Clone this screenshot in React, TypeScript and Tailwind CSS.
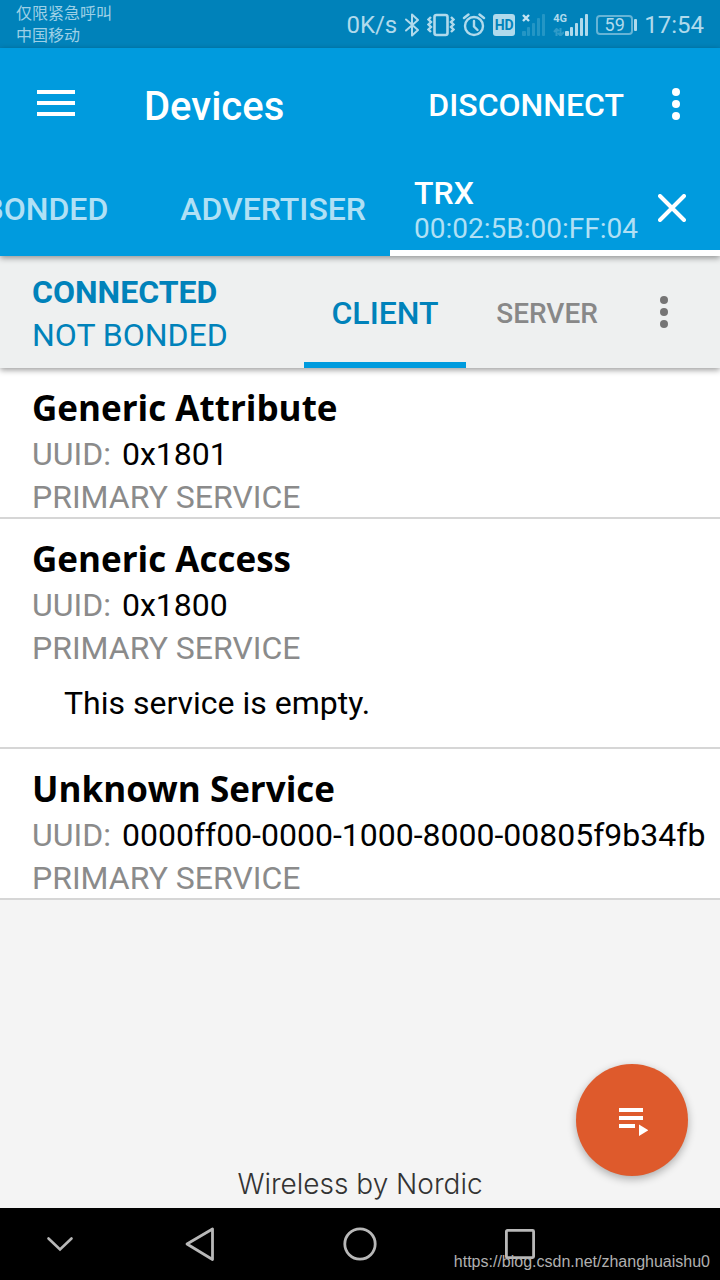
interface Service {
  name: string;
  uuid: string;
  message?: string;
}

const services: Service[] = [
  { name: "Generic Attribute", uuid: "0x1801" },
  { name: "Generic Access", uuid: "0x1800", message: "This service is empty." },
  { name: "Unknown Service", uuid: "0000ff00-0000-1000-8000-00805f9b34fb" },
];

function DotsIcon() {
  return (
    <svg className="h-8 w-2" viewBox="0 0 8 32" fill="currentColor" aria-hidden="true">
      <circle cx="4" cy="4" r="4" />
      <circle cx="4" cy="16" r="4" />
      <circle cx="4" cy="28" r="4" />
    </svg>
  );
}

function SignalBars() {
  return (
    <svg className="h-[22px] w-6" viewBox="0 0 24 22" fill="currentColor" aria-hidden="true">
      <rect x="0" y="17" width="4" height="5" rx="1" />
      <rect x="5" y="13" width="3" height="9" rx="1" />
      <rect x="10" y="9" width="3" height="13" rx="1" />
      <rect x="15" y="4" width="3" height="18" rx="1" />
      <rect x="20" y="0" width="3" height="22" rx="1" />
    </svg>
  );
}

function StatusBar() {
  return (
    <div className="flex h-12 items-center justify-between bg-[#0082ba] px-4 text-[#b0daec]">
      <div className="pb-[2px] font-['Noto_Sans_CJK_SC',sans-serif] text-[16px] leading-[22px] text-[#9dd0e6]">
        <p>仅限紧急呼叫</p>
        <p>中国移动</p>
      </div>
      <div className="flex items-center gap-[7px] pt-[2px]">
        <span className="text-[24px] leading-[28px]">0K/s</span>
        <svg className="h-6 w-4" viewBox="0 0 16 24" fill="none" stroke="currentColor" strokeWidth="2" strokeLinejoin="round" strokeLinecap="round" aria-hidden="true">
          <path d="M2 6.5 14 17l-6 5.5v-21L14 7 2 17.5" />
        </svg>
        <svg className="h-6 w-7" viewBox="0 0 28 24" fill="none" stroke="currentColor" strokeWidth="2.4" aria-hidden="true">
          <rect x="7.5" y="2" width="13" height="20" rx="2" strokeWidth="2.6" />
          <path d="M4 4 1.5 6.5 4 9 1.5 11.5 4 14 1.5 16.5 4 19M24 4l2.5 2.5L24 9l2.5 2.5L24 14l2.5 2.5L24 19" />
        </svg>
        <svg className="h-6 w-6" viewBox="-1 0 24 24" fill="none" stroke="currentColor" strokeWidth="2.4" strokeLinecap="round" aria-hidden="true">
          <circle cx="11" cy="13" r="9" />
          <path d="M11 8v5.5l3.5 3.5M1 5l4.5-3.5M21 5l-4.5-3.5" />
        </svg>
        <span className="flex h-[22px] w-[22px] items-center justify-center rounded-[3px] bg-[#b0daec] text-[14px] font-bold leading-none text-[#0082ba]">
          HD
        </span>
        <div className="relative text-[#2496c5]">
          <SignalBars />
          <svg className="absolute left-0 top-0 h-2 w-2 text-[#c4e4f2]" viewBox="0 0 8 8" stroke="currentColor" strokeWidth="2.4" aria-hidden="true">
            <path d="M1 1l6 6M7 1 1 7" />
          </svg>
        </div>
        <div className="relative pl-3">
          <SignalBars />
          <span className="absolute left-0 top-0 text-[11px] font-bold leading-[10px]">4G</span>
          <svg className="absolute bottom-0 left-0 h-2 w-[11px] text-[#2f9bc9]" viewBox="0 0 11 8" fill="none" stroke="currentColor" strokeWidth="2" aria-hidden="true">
            <path d="M3.5 8V1M1 4l2.5-3L6 3M7.5 0v7M5 5l2.5 2.5L11 4" />
          </svg>
        </div>
        <div className="flex items-center gap-[1px]">
          <span className="flex h-5 w-[37px] items-center justify-center rounded-[4px] border-2 border-[#66b4d6] text-[18px] leading-none">
            59
          </span>
          <span className="h-3 w-[3px] rounded-[1px] bg-[#b0daec]" />
        </div>
        <span className="text-[24px] leading-[28px]">17:54</span>
      </div>
    </div>
  );
}

function AppHeader() {
  return (
    <header className="relative z-20 bg-[#009bde] text-white shadow-[0_2px_6px_rgba(0,0,0,0.4)]">
      <div className="flex h-28 items-center pl-[37px] pr-10">
        <button aria-label="Menu">
          <svg className="h-7 w-[38px]" viewBox="0 0 38 28" fill="currentColor" aria-hidden="true">
            <path d="M0 0h38v4H0zM0 11h38v4H0zM0 22h38v4H0z" />
          </svg>
        </button>
        <h1 className="ml-[69px] flex-1 pt-[6px] text-[40px] font-medium leading-[48px]">Devices</h1>
        <button className="pt-[2px] text-[32px] font-medium leading-10">DISCONNECT</button>
        <button className="ml-12" aria-label="More options">
          <DotsIcon />
        </button>
      </div>
      <nav className="flex h-24 items-stretch">
        {/* scrolled strip, the first tab runs off the left edge */}
        <div className="flex min-w-0 flex-1 items-center justify-end overflow-hidden pt-[2px] text-[32px] font-medium text-[#b0e0f5]">
          <button className="shrink-0 pr-12">BONDED</button>
          <button className="shrink-0 px-6">ADVERTISER</button>
        </div>
        <div className="flex w-[330px] shrink-0 items-center border-b-[6px] border-white pl-6 pr-[34px] pt-[6px]">
          <button className="flex-1 pt-[5px] text-left">
            <span className="block text-[32px] font-medium leading-9">TRX</span>
            <span className="block text-[28px] leading-9 text-[#b0e0f5]">00:02:5B:00:FF:04</span>
          </button>
          <button aria-label="Close tab">
            <svg className="h-7 w-7" viewBox="0 0 28 28" stroke="currentColor" strokeWidth="4" strokeLinecap="round" aria-hidden="true">
              <path d="M2 2l24 24M26 2 2 26" />
            </svg>
          </button>
        </div>
      </nav>
    </header>
  );
}

function ConnectionBar() {
  return (
    <div className="relative z-10 flex h-28 items-stretch bg-[#eef0f0] pl-8 pr-[52px] shadow-[0_2px_6px_rgba(0,0,0,0.4)]">
      <div className="flex-1 self-center pt-1 text-[32px] leading-[43px] text-[#0082ba]">
        <p className="font-bold">CONNECTED</p>
        <p>NOT BONDED</p>
      </div>
      <button className="w-[162px] border-b-[6px] border-[#009bde] pt-2 text-[32px] font-medium text-[#0082ba]">
        CLIENT
      </button>
      <button className="w-[162px] pt-1 text-[28px] font-medium text-[#888888]">SERVER</button>
      <button className="ml-8 text-[#757575]" aria-label="Service options">
        <DotsIcon />
      </button>
    </div>
  );
}

function ServiceItem({ service }: { service: Service }) {
  return (
    <li className="border-b-2 border-[#d6d6d6] bg-white pl-8 pt-4 text-[32px] leading-[43px] text-black">
      <h2 className="pb-[2px] font-['Trebuchet_MS','Open_Sans',sans-serif] text-[35px] font-bold leading-[47px]">
        {service.name}
      </h2>
      <p className="flex gap-[11px] whitespace-nowrap">
        <span className="text-[#8b8b8b]">UUID:</span>
        <span>{service.uuid}</span>
      </p>
      <p className="h-[41px] text-[#8b8b8b]">PRIMARY SERVICE</p>
      {service.message && <p className="pb-[22px] pl-8 pt-[14px]">{service.message}</p>}
    </li>
  );
}

function NavigationBar() {
  return (
    <div className="relative flex h-[72px] items-center bg-black text-[#b8b8b8]">
      <button className="flex w-1/6 justify-center" aria-label="Hide navigation">
        <svg className="h-4 w-7" viewBox="0 0 28 16" fill="none" stroke="currentColor" strokeWidth="2.6" strokeLinecap="round" aria-hidden="true">
          <path d="M2.5 2.5 14 13.5l11.5-11" />
        </svg>
      </button>
      <button className="flex w-2/9 justify-center" aria-label="Back">
        <svg className="h-9 w-8" viewBox="0 0 32 36" fill="none" stroke="currentColor" strokeWidth="2.8" strokeLinejoin="round" aria-hidden="true">
          <path d="M28.5 3v30.5L3 18z" />
        </svg>
      </button>
      <button className="flex w-2/9 justify-center" aria-label="Home">
        <svg className="h-9 w-9" viewBox="0 0 36 36" fill="none" stroke="currentColor" strokeWidth="2.8" aria-hidden="true">
          <circle cx="18" cy="18" r="15.2" />
        </svg>
      </button>
      <button className="flex w-2/9 justify-center" aria-label="Recent apps">
        <svg className="h-8 w-8" viewBox="0 0 32 32" fill="none" stroke="currentColor" strokeWidth="2.8" aria-hidden="true">
          <rect x="2.4" y="2.4" width="27.2" height="27.2" rx="1" />
        </svg>
      </button>
      <span className="absolute bottom-2 right-[10px] font-['Liberation_Sans',sans-serif] text-[16px] leading-5 text-[#b0b0b0]">
        https://blog.csdn.net/zhanghuaishu0
      </span>
    </div>
  );
}

export default function App() {
  return (
    <div className="flex min-h-screen flex-col bg-[#f4f4f4] font-['Roboto',sans-serif]">
      <StatusBar />
      <AppHeader />
      <ConnectionBar />
      <main className="relative flex flex-1 flex-col">
        <ul>
          {services.map((service) => (
            <ServiceItem key={service.uuid} service={service} />
          ))}
        </ul>
        <p className="mt-auto pb-2 text-center font-['Inter',sans-serif] text-[28px] font-light leading-8 text-[#333333]">
          Wireless by Nordic
        </p>
        <button
          className="absolute bottom-8 right-8 flex h-28 w-28 items-center justify-center rounded-full bg-[#de5a2c] text-white shadow-[0_3px_8px_rgba(0,0,0,0.3)]"
          aria-label="Run macro"
        >
          <svg className="h-8 w-8" viewBox="-3 -4 32 32" fill="currentColor" aria-hidden="true">
            <path d="M0 0h24v4H0zM0 8h24v4H0zM0 16h16v4H0zM20 16.5V28l9.5-5.8z" />
          </svg>
        </button>
      </main>
      <NavigationBar />
    </div>
  );
}
